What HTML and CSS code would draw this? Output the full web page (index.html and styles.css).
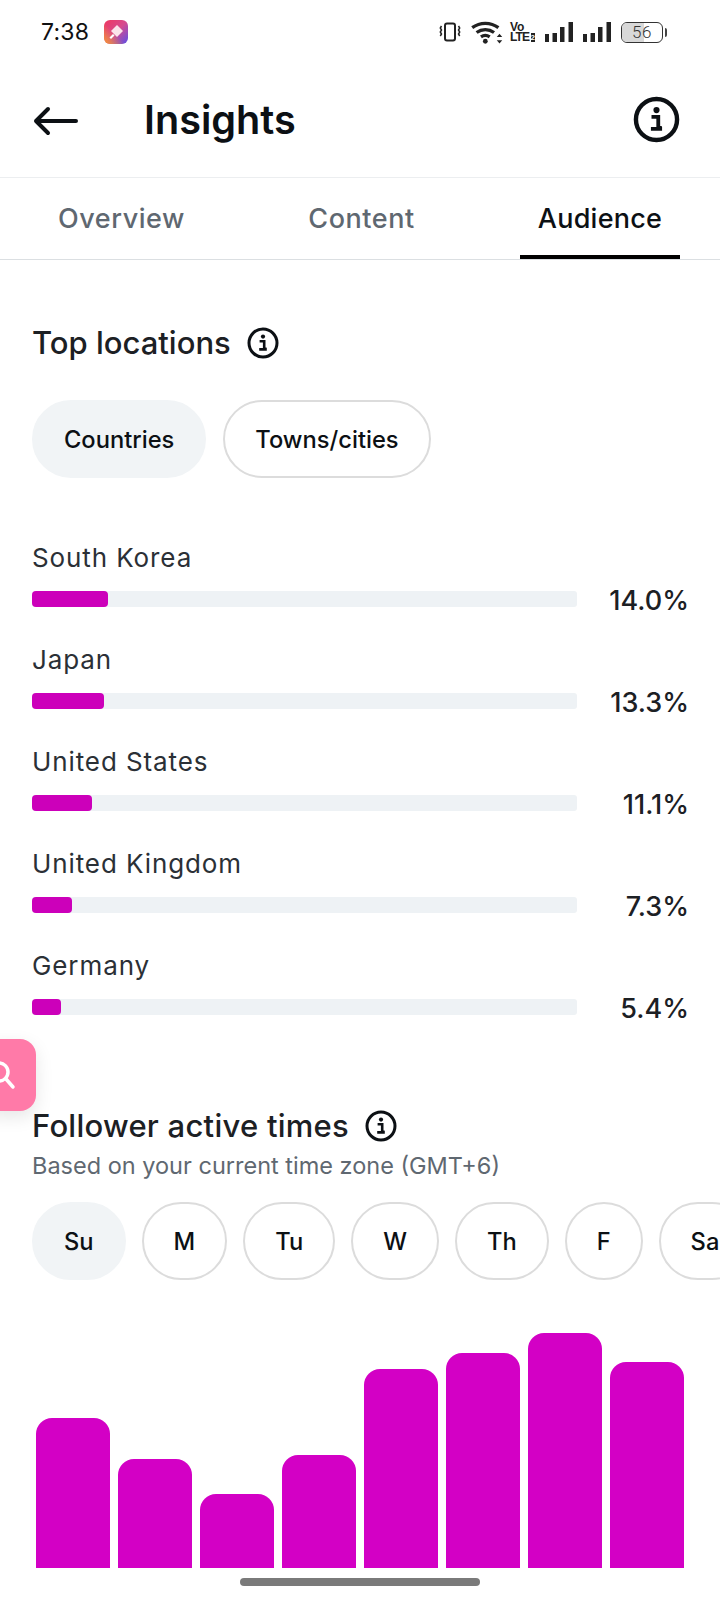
FILE: index.html
```html
<!DOCTYPE html>
<html lang="en">
<head>
<meta charset="utf-8">
<title>Insights</title>
<link rel="stylesheet" href="styles.css">
</head>
<body>
<svg class="defs" width="0" height="0" aria-hidden="true">
  <symbol id="info" viewBox="0 0 32 32">
    <circle cx="16" cy="16" r="14" fill="none" stroke="currentColor" stroke-width="3"/>
    <circle cx="16" cy="9.6" r="2.1" fill="currentColor"/>
    <path d="M12.6 14.2h4.6v7.6h2.4M12.2 22.4h7.6" fill="none" stroke="currentColor" stroke-width="2.6"/>
  </symbol>
</svg>
<div class="screen">
  <div class="status">
    <span class="time">7:38</span>
    <svg class="appicon" viewBox="0 0 24 24">
      <defs><linearGradient id="ag" x1="0" y1="0" x2="1" y2="1"><stop offset="0" stop-color="#f0365f"/><stop offset=".5" stop-color="#d64a8e"/><stop offset="1" stop-color="#5a4fe8"/></linearGradient>
      <linearGradient id="ag2" x1="0" y1="1" x2="1" y2="0"><stop offset="0" stop-color="#f79a2e"/><stop offset=".45" stop-color="#f79a2e" stop-opacity="0"/></linearGradient></defs>
      <rect width="24" height="24" rx="6" fill="url(#ag)"/>
      <rect width="24" height="24" rx="6" fill="url(#ag2)"/>
      <path d="M13 5l6 6-6 6-6-6z" fill="#fbe3ea"/>
      <path d="M9 14l-3.500 3.500 1.500 1.500 3.500-3.500z" fill="#fff"/>
    </svg>
    <span class="spacer"></span>
    <svg class="s-vib" viewBox="0 0 22 20">
      <rect x="6" y="1.500" width="10" height="17" rx="2" fill="none" stroke="#222" stroke-width="2"/>
      <path d="M2.500 4l-1.200 2 1.200 2-1.200 2 1.200 2-1.200 2M19.500 4l1.200 2-1.200 2 1.200 2-1.200 2 1.200 2" fill="none" stroke="#222" stroke-width="1.500"/>
    </svg>
    <svg class="s-wifi" viewBox="0 0 30 22">
      <path d="M1 7a20 20 0 0 1 24 0M5 11.500a13.500 13.500 0 0 1 16 0M9 15.500a7 7 0 0 1 8 0" fill="none" stroke="#222" stroke-width="3"/>
      <circle cx="13" cy="19.500" r="2.200" fill="#222"/>
      <path d="M26 12.500l2.500 3h-5zM26 21.500l2.500-3h-5z" fill="#222"/>
    </svg>
    <span class="s-volte"><span class="vo">Vo</span><span class="lte">LTE<i class="sim">2</i></span></span>
    <svg class="s-sig" viewBox="0 0 28 20"><path d="M0 12h4v8H0zM7.500 11H12v9H7.500zM15 5h4.500v15H15zM23.500 0H28v20h-4.500z" fill="#222"/></svg>
    <svg class="s-sig" viewBox="0 0 28 20"><path d="M0 12h4v8H0zM7.500 11H12v9H7.500zM15 5h4.500v15H15zM23.500 0H28v20h-4.500z" fill="#222"/></svg>
    <span class="battery"><span class="batt-fill"></span><span class="batt-num">56</span></span>
    <span class="batt-tip"></span>
  </div>

  <header class="appbar">
    <svg class="back" viewBox="0 0 46 30"><path d="M43 15H3M15 3L3 15l12 12" fill="none" stroke="#0c1014" stroke-width="4" stroke-linecap="round" stroke-linejoin="round"/></svg>
    <h1 class="title">Insights</h1>
    <svg class="info-lg"><use href="#info"/></svg>
  </header>

  <nav class="tabs">
    <span class="tab tab-1">Overview</span>
    <span class="tab tab-2">Content</span>
    <span class="tab tab-3 active">Audience</span>
  </nav>

  <section class="locations">
    <div class="heading"><h2>Top locations</h2><svg class="info-sm"><use href="#info"/></svg></div>
    <div class="chips">
      <span class="chip on">Countries</span>
      <span class="chip">Towns/cities</span>
    </div>
    <div class="rows">
      <div class="row"><div class="row-name">South Korea</div><div class="row-line"><div class="track"><div class="fill" style="width:14%"></div></div><span class="pct">14.0%</span></div></div>
      <div class="row"><div class="row-name">Japan</div><div class="row-line"><div class="track"><div class="fill" style="width:13.3%"></div></div><span class="pct">13.3%</span></div></div>
      <div class="row"><div class="row-name">United States</div><div class="row-line"><div class="track"><div class="fill" style="width:11.1%"></div></div><span class="pct">11.1%</span></div></div>
      <div class="row"><div class="row-name">United Kingdom</div><div class="row-line"><div class="track"><div class="fill" style="width:7.3%"></div></div><span class="pct">7.3%</span></div></div>
      <div class="row"><div class="row-name">Germany</div><div class="row-line"><div class="track"><div class="fill" style="width:5.4%"></div></div><span class="pct">5.4%</span></div></div>
    </div>
  </section>

  <section class="active-times">
    <div class="heading"><h2>Follower active times</h2><svg class="info-sm"><use href="#info"/></svg></div>
    <p class="sub">Based on your current time zone (GMT+6)</p>
    <div class="chips days">
      <span class="chip on">Su</span>
      <span class="chip">M</span>
      <span class="chip">Tu</span>
      <span class="chip">W</span>
      <span class="chip">Th</span>
      <span class="chip">F</span>
      <span class="chip">Sa</span>
    </div>
    <div class="chart">
      <div class="bar" style="height:150px"></div>
      <div class="bar" style="height:109px"></div>
      <div class="bar" style="height:74px"></div>
      <div class="bar" style="height:113px"></div>
      <div class="bar" style="height:199px"></div>
      <div class="bar" style="height:215px"></div>
      <div class="bar" style="height:235px"></div>
      <div class="bar" style="height:206px"></div>
    </div>
  </section>

  <div class="home-pill"></div>

  <div class="float-btn">
    <svg viewBox="0 0 36 72"><circle cx="-1" cy="33" r="9" fill="none" stroke="#fff" stroke-width="3.500" /><path d="M6 40l7 8" stroke="#fff" stroke-width="3.500" stroke-linecap="round"/></svg>
  </div>
</div>
</body>
</html>
```

FILE: styles.css
```css
* { box-sizing: border-box; }
html, body { margin: 0; padding: 0; background: #fff; }
body { font-family: Inter, "Liberation Sans", sans-serif; color: #1c2024; }
.defs { position: absolute; }
.screen { position: relative; width: 720px; height: 1600px; overflow: hidden; background: #fff; }

.status { height: 64px; display: flex; align-items: center; padding: 0 0 0 41px; }
.time { font-size: 23px; color: #111; line-height: 1; letter-spacing: .2px; }
.appicon { width: 24px; height: 24px; margin-left: 15px; }
.spacer { flex: 1; }
.s-vib { width: 22px; height: 20px; }
.s-wifi { width: 33px; height: 24px; margin-left: 10px; }
.s-volte { display: flex; flex-direction: column; width: 25px; margin-left: 6px; color: #222; font-family: "Liberation Sans", sans-serif; font-weight: 700; line-height: 10px; }
.vo { font-size: 12px; }
.lte { font-size: 12px; letter-spacing: -.9px; white-space: nowrap; display: flex; align-items: center; }
.sim { font-style: normal; font-size: 8px; line-height: 9px; background: #222; color: #fff; width: 7px; height: 9px; margin-left: 1.500px; text-align: center; letter-spacing: 0; }
.s-sig { width: 28px; height: 20px; margin-left: 10px; }
.battery { position: relative; width: 42px; height: 21px; margin-left: 10px; border: 1.500px solid #333; border-radius: 6px; overflow: hidden; display: flex; align-items: center; justify-content: center; }
.batt-fill { position: absolute; left: 0; top: 0; bottom: 0; width: 56%; background: #d8d8d8; }
.batt-num { position: relative; font-size: 17px; color: #333; font-family: Roboto, sans-serif; font-weight: 300; letter-spacing: .5px; }
.batt-tip { width: 2px; height: 9px; background: #444; border-radius: 0 2px 2px 0; margin: 0 53px 0 2px; }

.appbar { height: 113px; display: flex; align-items: center; padding: 0 40px 2px 33px; }
.back { width: 46px; height: 30px; margin-top: 2px; }
.title { margin: 2px 0 0 65px; flex: 1; font-size: 39.600px; line-height: 1; font-weight: 600; color: #0c1014; }
.info-lg { width: 47px; height: 47px; color: #0c1014; }

.tabs { height: 83px; display: flex; align-items: center; border-top: 1px solid #eceef0; border-bottom: 1px solid #dbdfe2; }
.tab { font-size: 27px; font-weight: 500; color: #5f6871; text-align: center; letter-spacing: .55px; }
.tab-1 { width: 243px; }
.tab-2 { width: 237px; }
.tab-3 { width: 240px; }
.tab.active { position: relative; height: 81px; line-height: 81px; color: #0c1014; letter-spacing: .25px; }
.tab.active::after { content: ""; position: absolute; left: 40px; right: 40px; bottom: 0; height: 4px; background: #000; }

.locations { padding: 0 31px 0 32px; }
.heading { display: flex; align-items: center; gap: 16px; }
.heading h2 { margin: 0; font-size: 31px; line-height: 40px; font-weight: 500; color: #1c2024; }
.info-sm { width: 32px; height: 32px; color: #0c1014; }
.locations .heading { padding-top: 63px; }
.chips { display: flex; gap: 17px; margin-top: 37px; }
.chip { height: 78px; padding: 0 30px; border-radius: 39px; border: 2px solid #dcdcdc; display: flex; align-items: center; justify-content: center; font-size: 23.700px; font-weight: 500; color: #0c1014; flex: none; }
.chip.on { background: #f1f4f6; border-color: #f1f4f6; }

.rows { margin-top: 60px; }
.row { height: 102px; }
.row-name { font-size: 26px; line-height: 40px; color: #2b3036; letter-spacing: .9px; }
.row-line { display: flex; align-items: center; height: 32px; margin-top: 5px; }
.track { width: 545px; height: 16px; border-radius: 3px; background: #eef2f5; }
.fill { height: 16px; border-radius: 4px; background: #cc00ba; }
.pct { flex: 1; text-align: right; font-size: 27px; font-weight: 500; color: #1c2024; padding-top: 2px; }

.active-times { position: absolute; left: 0; right: 0; top: 1106px; padding-left: 32px; }
.active-times .heading { gap: 16px; }
.active-times h2 { letter-spacing: .25px; }
.sub { margin: 0; font-size: 23.500px; line-height: 40px; color: #5f6871; white-space: nowrap; }
.days { margin-top: 16px; gap: 16px; width: 760px; }
.chart { display: flex; align-items: flex-end; gap: 8px; height: 260px; margin: 28px 0 0 4px; }
.bar { width: 74px; border-radius: 16px 16px 0 0; background: #d300c5; }

.home-pill { position: absolute; left: 240px; bottom: 14px; width: 240px; height: 8px; border-radius: 4px; background: #7a7a7a; }
.float-btn { position: absolute; left: -10px; top: 1039px; width: 46px; height: 72px; border-radius: 0 16px 16px 0; background: #ff7aa8; box-shadow: 0 6px 18px rgba(0,0,0,.1); padding-left: 10px; }
.float-btn svg { display: block; width: 36px; height: 72px; }
```
